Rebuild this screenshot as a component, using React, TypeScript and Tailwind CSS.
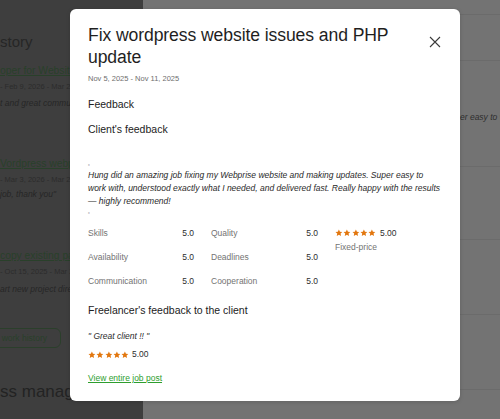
import React from "react";

const Star = ({ size = 7.8 }: { size?: number }) => (
  <svg width={size} height={size} viewBox="0 0 24 24" className="shrink-0">
    <path
      d="M12 1.5l3.2 6.7 7.3.9-5.4 5 1.5 7.3L12 17.8l-6.6 3.6 1.5-7.3-5.4-5 7.3-.9z"
      fill="#e2770f"
    />
  </svg>
);

const Stars = () => (
  <div className="flex items-center gap-[0.5px]">
    <Star />
    <Star />
    <Star />
    <Star />
    <Star />
  </div>
);

const Rating = ({ label, value }: { label: string; value: string }) => (
  <div className="flex items-center justify-between h-[24px]">
    <span className="text-[#737373]">{label}</span>
    <span className="text-[#2d2d2d]">{value}</span>
  </div>
);

export default function App() {
  return (
    <div className="relative w-[500px] h-[419px] overflow-hidden flex font-['Liberation_Sans',Arial,sans-serif]">
      {/* left background column */}
      <div className="w-[143px] shrink-0 bg-[#3e3e3e] overflow-hidden whitespace-nowrap text-[#262626]">
        <div className="mt-[33px] text-[15px] leading-[18px]">story</div>
        <div className="mt-[13px] text-[10.3px] leading-[13px] text-[#29402a] underline">oper for Website Developer</div>
        <div className="mt-[5px] text-[7.5px] leading-[10px] text-[#2c2c2c]">- Feb 9, 2026 - Mar 2, 2026</div>
        <div className="mt-[6px] text-[8.5px] leading-[11px] italic">t and great communication</div>
        <div className="mt-[48px] text-[10.3px] leading-[13px] text-[#29402a] underline">Vordpress webpage</div>
        <div className="mt-[5px] text-[7.5px] leading-[10px] text-[#2c2c2c]">- Mar 3, 2026 - Mar 2, 2026</div>
        <div className="mt-[4px] text-[8.5px] leading-[11px] italic">job, thank you"</div>
        <div className="mt-[49px] text-[10.3px] leading-[13px] text-[#29402a] underline">copy existing page</div>
        <div className="mt-[5px] text-[7.5px] leading-[10px] text-[#2c2c2c]">- Oct 15, 2025 - Mar 2, 2026</div>
        <div className="mt-[7px] text-[8.5px] leading-[11px] italic">art new project directly</div>
        <div className="mt-[33px] ml-[-20px] w-[81px] h-[20px] rounded-[6px] border border-[#2b3f2b] flex items-center justify-end pr-[13px] text-[8.5px] text-[#29402a]">
          work history
        </div>
        <div className="mt-[33px] text-[17px] leading-[22px] text-[#232323]">ss manager</div>
      </div>

      {/* right background */}
      <div className="flex-1 bg-[#737373] flex flex-col">
        <div className="h-[15px] border-b border-[#6b6b6b]" />
        <div className="h-[46px] border-b border-[#6b6b6b]" />
        <div className="h-[106px] border-b border-[#6b6b6b] flex flex-col justify-start overflow-hidden">
          <div className="mt-[51px] ml-[317px] whitespace-nowrap text-[8.5px] leading-[11px] italic text-[#2e2e2e]">
            er easy to w
          </div>
        </div>
        <div className="h-[73px] border-b border-[#6b6b6b]" />
        <div className="h-[75px] border-b border-[#6b6b6b]" />
        <div className="h-[75px] border-b border-[#6b6b6b]" />
      </div>

      {/* modal */}
      <div className="absolute left-[70px] top-[9px] w-[390px] h-[392px] bg-white rounded-[6px] shadow-[0_1px_4px_rgba(0,0,0,0.15)] px-[18px] pt-[15px] text-[#222]">
        <div className="flex justify-between items-start">
          <h1 className="w-[320px] text-[17.6px] leading-[22px] text-[#1f1f1f] tracking-[-0.1px]">
            Fix wordpress website issues and PHP update
          </h1>
          <svg width="12" height="12" viewBox="0 0 12 12" className="mt-[12px] mr-[1px]">
            <path d="M1 1L11 11M11 1L1 11" stroke="#3a3a3a" strokeWidth="1.1" />
          </svg>
        </div>
        <div className="mt-[6px] text-[7.5px] leading-[10px] text-[#6e6e6e]">Nov 5, 2025 - Nov 11, 2025</div>
        <div className="mt-[13px] text-[10.5px] leading-[14px] text-[#222]">Feedback</div>
        <div className="mt-[11px] text-[10.5px] leading-[14px] text-[#222]">Client's feedback</div>

        <div className="mt-[24px] text-[5px] leading-[6px] text-[#555]">„</div>
        <p className="mt-[3px] text-[8.5px] leading-[13px] italic text-[#2a2a2a]">
          Hung did an amazing job fixing my Webprise website and making updates. Super easy to work with, understood exactly what I needed, and delivered fast. Really happy with the results — highly recommend!
        </p>
        <div className="text-[5px] leading-[6px] text-[#555]">„</div>

        <div className="mt-[7px] flex text-[8.5px] leading-[11px]">
          <div className="w-[106px] flex flex-col">
            <Rating label="Skills" value="5.0" />
            <Rating label="Availability" value="5.0" />
            <Rating label="Communication" value="5.0" />
          </div>
          <div className="ml-[17px] w-[107px] flex flex-col">
            <Rating label="Quality" value="5.0" />
            <Rating label="Deadlines" value="5.0" />
            <Rating label="Cooperation" value="5.0" />
          </div>
          <div className="ml-[17px] flex flex-col">
            <div className="h-[24px] flex items-center gap-[4px]">
              <Stars />
              <span className="text-[#2d2d2d]">5.00</span>
            </div>
            <div className="mt-[-3px] text-[#737373]">Fixed-price</div>
          </div>
        </div>

        <div className="mt-[10px] text-[10.5px] leading-[14px] text-[#222]">Freelancer's feedback to the client</div>
        <div className="mt-[14px] text-[8.5px] leading-[11px] italic text-[#2a2a2a]">" Great client !! "</div>
        <div className="mt-[7px] flex items-center gap-[3px] text-[8.5px] leading-[11px]">
          <Stars />
          <span className="text-[#2d2d2d]">5.00</span>
        </div>
        <div className="mt-[13px] text-[8.5px] leading-[11px] text-[#2e9e2e] underline">View entire job post</div>
      </div>
    </div>
  );
}
